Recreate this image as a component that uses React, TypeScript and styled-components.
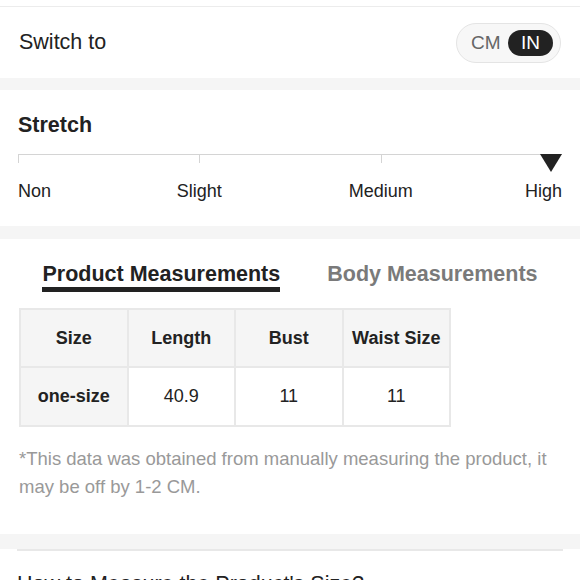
import React from "react";
import styled, { createGlobalStyle } from "styled-components";

const GlobalStyle = createGlobalStyle`
  body {
    margin: 0;
    background: #fff;
    font-family: "Liberation Sans", Arial, sans-serif;
    color: #222;
  }
`;

const Page = styled.div`
  width: 580px;
  overflow: hidden;
`;

const TopRule = styled.div`
  height: 6px;
  border-bottom: 1px solid #ececec;
`;

const SwitchRow = styled.div`
  height: 71px;
  padding: 0 19px;
  display: flex;
  align-items: center;
  justify-content: space-between;
`;

const SwitchLabel = styled.span`
  font-size: 21.5px;
  color: #222;
`;

const Toggle = styled.div`
  box-sizing: border-box;
  width: 105px;
  height: 40px;
  padding: 0 7px 0 14px;
  border: 1px solid #e4e4e4;
  border-radius: 20px;
  background: #f7f7f7;
  display: flex;
  align-items: center;
  justify-content: space-between;
`;

const ToggleOption = styled.span<{ active?: boolean }>`
  height: 26px;
  padding: 0 ${({ active }) => (active ? "13px" : "0")};
  border-radius: 13px;
  display: flex;
  align-items: center;
  font-size: 19px;
  color: ${({ active }) => (active ? "#fff" : "#666")};
  background: ${({ active }) => (active ? "#222" : "transparent")};
`;

const Band = styled.div<{ h: number }>`
  height: ${({ h }) => h}px;
  background: #f5f5f5;
`;

const StretchSection = styled.section`
  padding: 23px 18px 25px;
`;

const Heading = styled.h2`
  margin: 0;
  font-size: 21.5px;
  font-weight: bold;
  line-height: 1.15;
  color: #222;
`;

const Track = styled.div`
  position: relative;
  margin-top: 16px;
  display: grid;
  grid-template-columns: repeat(3, 1fr);
`;

const Segment = styled.div`
  height: 8px;
  border-top: 1px solid #d4d4d4;
  border-left: 1px solid #d4d4d4;
`;

const Marker = styled.div`
  position: absolute;
  right: 0;
  top: 0;
  width: 0;
  height: 0;
  border-left: 11.5px solid transparent;
  border-right: 11.5px solid transparent;
  border-top: 18px solid #222;
`;

const Labels = styled.div`
  margin-top: 18px;
  display: grid;
  grid-template-columns: repeat(3, 1fr);
  font-size: 18px;
  line-height: 1.15;
  color: #222;
`;

const Label = styled.span<{ col: number; align: "start" | "center" | "end" }>`
  grid-row: 1;
  grid-column: ${({ col }) => col};
  justify-self: ${({ align }) => (align === "end" ? "end" : "start")};
  transform: ${({ align }) => (align === "center" ? "translateX(-50%)" : "none")};
`;

const MeasureSection = styled.section`
  padding: 23px 19px 33px;
`;

const Tabs = styled.div`
  display: flex;
  justify-content: center;
  gap: 47px;
`;

const Tab = styled.div<{ active?: boolean }>`
  font-size: 21.5px;
  font-weight: bold;
  line-height: 1.15;
  color: ${({ active }) => (active ? "#222" : "#7a7a7a")};
  border-bottom: 5px solid ${({ active }) => (active ? "#222" : "transparent")};
`;

const Table = styled.table`
  margin-top: 16px;
  border-collapse: collapse;
  table-layout: fixed;
  width: 432px;
`;

const Cell = styled.td<{ head?: boolean; h: number }>`
  height: ${({ h }) => h}px;
  padding: 0;
  border: 2px solid #e8e8e8;
  text-align: center;
  font-size: 18px;
  font-weight: ${({ head }) => (head ? "bold" : "normal")};
  background: ${({ head }) => (head ? "#f5f5f5" : "#fff")};
  color: #222;
`;

const Note = styled.p`
  margin: 18px 0 0;
  font-size: 18.5px;
  line-height: 28px;
  color: #999;
`;

const HowTo = styled.section`
  margin: 0 17px;
  padding-top: 21px;
  border-top: 2px solid #e8e8e8;
  font-size: 21.5px;
  line-height: 1.15;
  color: #222;
`;

const headers = ["Size", "Length", "Bust", "Waist Size"];
const values = ["40.9", "11", "11"];

export default function App() {
  return (
    <Page>
      <GlobalStyle />
      <TopRule />
      <SwitchRow>
        <SwitchLabel>Switch to</SwitchLabel>
        <Toggle>
          <ToggleOption>CM</ToggleOption>
          <ToggleOption active>IN</ToggleOption>
        </Toggle>
      </SwitchRow>
      <Band h={12} />

      <StretchSection>
        <Heading>Stretch</Heading>
        <Track>
          <Segment />
          <Segment />
          <Segment />
          <Marker />
        </Track>
        <Labels>
          <Label col={1} align="start">Non</Label>
          <Label col={2} align="center">Slight</Label>
          <Label col={3} align="center">Medium</Label>
          <Label col={3} align="end">High</Label>
        </Labels>
      </StretchSection>
      <Band h={13} />

      <MeasureSection>
        <Tabs>
          <Tab active>Product Measurements</Tab>
          <Tab>Body Measurements</Tab>
        </Tabs>
        <Table>
          <tbody>
            <tr>
              {headers.map((h) => (
                <Cell key={h} head h={56}>
                  {h}
                </Cell>
              ))}
            </tr>
            <tr>
              <Cell head h={57}>
                one-size
              </Cell>
              {values.map((v, i) => (
                <Cell key={i} h={57}>
                  {v}
                </Cell>
              ))}
            </tr>
          </tbody>
        </Table>
        <Note>
          *This data was obtained from manually measuring the product, it may
          be off by 1-2 CM.
        </Note>
      </MeasureSection>
      <Band h={15} />

      <HowTo>How to Measure the Product's Size?</HowTo>
    </Page>
  );
}
